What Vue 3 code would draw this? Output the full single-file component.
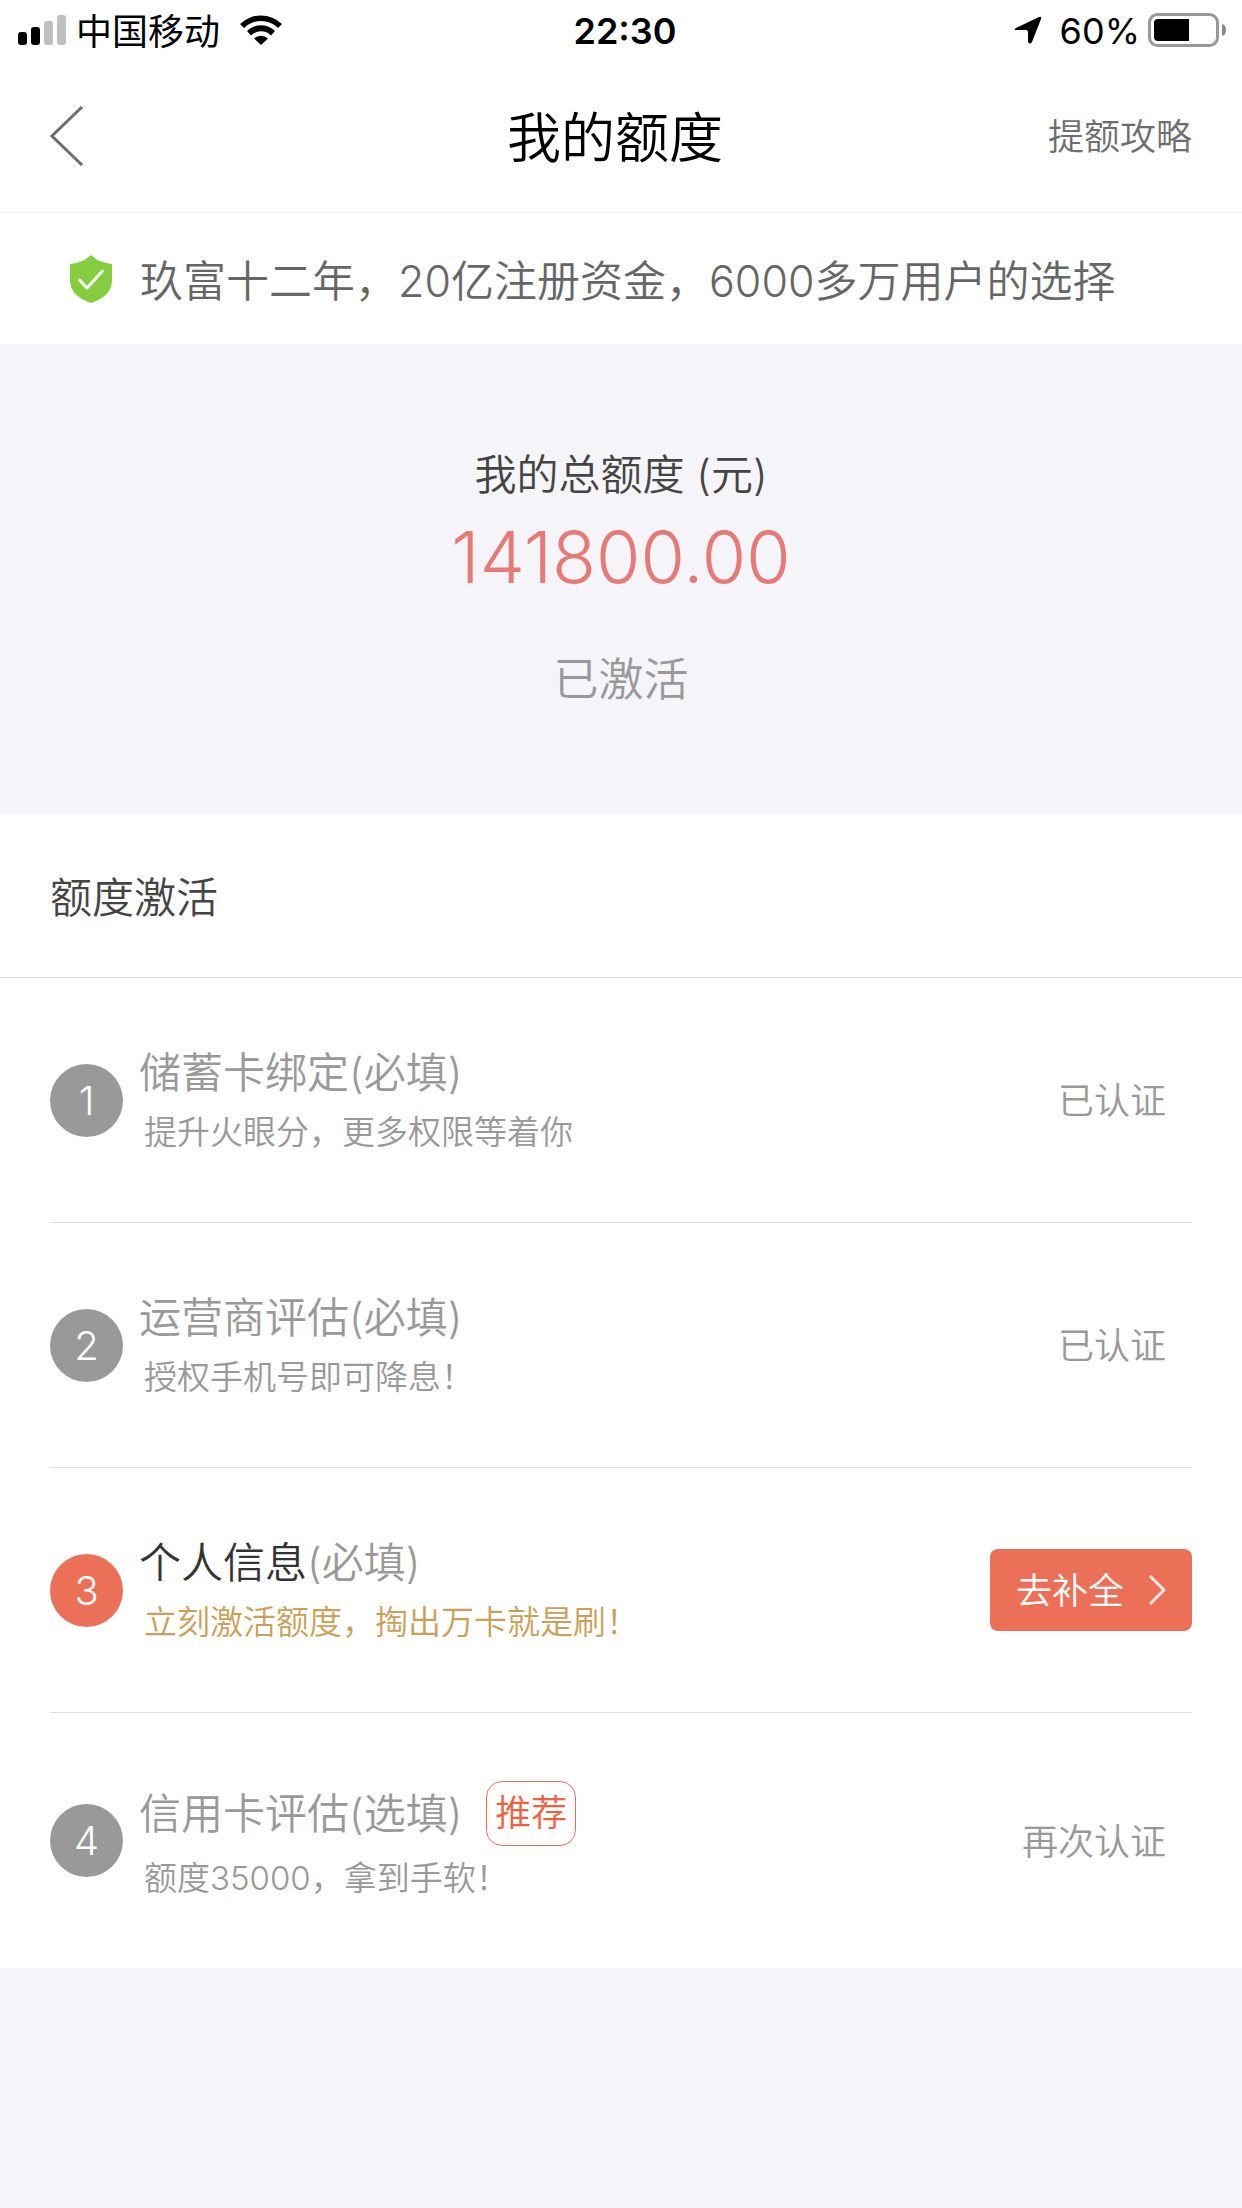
<template>
  <div class="page">
    <div class="statusBar">
      <div class="side">
        <svg class="signal" viewBox="0 0 48 30" width="48" height="30">
          <rect x="0" y="17" width="9" height="13" rx="3" />
          <rect x="13" y="12" width="9" height="18" rx="3" />
          <rect x="26" y="6" width="9" height="24" rx="3" fill="#bfbfbf" />
          <rect x="39" y="0" width="9" height="30" rx="3" fill="#bfbfbf" />
        </svg>
        <span class="carrier">中国移动</span>
        <svg class="wifi" viewBox="0 0 42 30" width="42" height="30">
          <path d="M0 9 A30 30 0 0 1 42 9 L38 13 A24 24 0 0 0 4 13 Z" />
          <path d="M7 16 A20 20 0 0 1 35 16 L31 20.500 A14 14 0 0 0 11 20.500 Z" />
          <path d="M14 23.500 A10 10 0 0 1 28 23.500 L21 30 Z" />
        </svg>
      </div>
      <span class="time">22:30</span>
      <div class="side right">
        <svg class="location" viewBox="0 0 28 28" width="28" height="28">
          <path d="M2 12 L25 1 Q28 0 27 3 L18 26 Q16 29 14 26 V16 Q14 14 12 14 H2 Q-1 14 2 12 Z" />
        </svg>
        <span class="percent">60%</span>
        <svg class="battery" viewBox="0 0 80 34" width="80" height="34">
          <rect x="1.500" y="1.500" width="68" height="31" rx="8" fill="none" stroke="#999" stroke-width="3" />
          <path d="M10 6 H41 V28 H10 Q6 28 6 24 V10 Q6 6 10 6 Z" />
          <path d="M74 11 Q78 12 78 17 Q78 22 74 23 Z" fill="#888" />
        </svg>
      </div>
    </div>

    <header class="navBar">
      <div class="navSide">
        <button class="back" type="button" aria-label="返回">
          <svg viewBox="0 0 34 60" width="34" height="60">
            <path d="M32 1 L2 30 L32 59" fill="none" stroke="#6e6e6e" stroke-width="3" />
          </svg>
        </button>
      </div>
      <h1>我的额度</h1>
      <div class="navSide right">
        <a href="#">提额攻略</a>
      </div>
    </header>

    <div class="notice">
      <svg viewBox="0 0 42 48" width="42" height="48">
        <path d="M21 0 Q29 8 42 9 V25 Q42 41 21 48 Q0 41 0 25 V9 Q13 8 21 0 Z" fill="#85cc3e" />
        <path d="M9.500 25 L17 33 L32.500 16" fill="none" stroke="#fff" stroke-width="3" stroke-linecap="round" stroke-linejoin="round" />
      </svg>
      <span>玖富十二年，20亿注册资金，6000多万用户的选择</span>
    </div>

    <section class="quota">
      <p class="label">我的总额度 (元)</p>
      <p class="amount">141800.00</p>
      <p class="state">已激活</p>
    </section>

    <section class="activate">
      <h2>额度激活</h2>
      <ul>
        <li v-for="(item, index) in stepList" :key="index" :class="{ active: item.active }">
          <span class="number">{{ index + 1 }}</span>
          <div class="info">
            <p class="name">
              <span><span class="strong">{{ item.name }}</span>({{ item.required ? '必填' : '选填' }})</span>
              <span v-if="item.tag" class="tag">{{ item.tag }}</span>
            </p>
            <p class="desc">{{ item.desc }}</p>
          </div>
          <button v-if="item.active" class="fill" type="button" @click="handleFill(index)">
            <span>{{ item.status }}</span>
            <svg viewBox="0 0 18 32" width="18" height="32">
              <path d="M2 2 L16 16 L2 30" fill="none" stroke="#fff" stroke-opacity="0.85" stroke-width="3" />
            </svg>
          </button>
          <span v-else class="status">{{ item.status }}</span>
        </li>
      </ul>
    </section>
  </div>
</template>

<script setup>
import { ref } from 'vue'

// 额度激活步骤
const stepList = ref([
  { name: '储蓄卡绑定', required: true, desc: '提升火眼分，更多权限等着你', status: '已认证' },
  { name: '运营商评估', required: true, desc: '授权手机号即可降息！', status: '已认证' },
  { name: '个人信息', required: true, desc: '立刻激活额度，掏出万卡就是刷！', status: '去补全', active: true },
  { name: '信用卡评估', required: false, desc: '额度35000，拿到手软！', status: '再次认证', tag: '推荐' },
])

// 补全信息
const handleFill = (index) => {
  stepList.value[index].active = false
  stepList.value[index].status = '已认证'
}
</script>

<style>
body {
  margin: 0;
  background-color: #f4f4f9;
}
</style>

<style scoped>
.page {
  font-family: Inter, "Noto Sans CJK SC", sans-serif;
  font-weight: 350;
  color: #999;
}

h1, h2, p, ul {
  margin: 0;
  padding: 0;
  font-weight: inherit;
}

button {
  border: none;
  padding: 0;
  background: none;
  font: inherit;
  cursor: pointer;
}

svg {
  display: block;
  flex-shrink: 0;
}

.statusBar {
  display: flex;
  align-items: center;
  height: 60px;
  padding: 0 14px 0 18px;
  background-color: #fff;
  color: #000;
  font-size: 36px;
  font-weight: 400;

  .side {
    flex: 1;
    display: flex;
    align-items: center;
  }

  .right {
    justify-content: flex-end;
  }

  .carrier {
    margin: 0 20px 0 10px;
    padding-bottom: 2px;
  }

  .time {
    padding: 2px 0 0 4px;
    font-weight: 600;
  }

  .percent {
    margin: 0 8px 0 18px;
    padding-top: 2px;
  }
}

.navBar {
  display: flex;
  align-items: center;
  height: 152px;
  padding: 0 50px;
  background-color: #fff;
  border-bottom: 1px solid #ededed;

  .navSide {
    flex: 1;
    display: flex;
  }

  .right {
    justify-content: flex-end;
  }

  h1 {
    padding: 0 12px 4px 0;
    color: #000;
    font-size: 54px;
  }

  a {
    padding-bottom: 4px;
    color: #6e6e6e;
    font-size: 36px;
    text-decoration: none;
  }
}

.notice {
  display: flex;
  align-items: center;
  gap: 28px;
  height: 131px;
  padding: 0 70px;
  background-color: #fff;
  color: #666;
  font-size: 43px;
  white-space: nowrap;

  span {
    padding-bottom: 2px;
  }
}

.quota {
  padding: 101px 0 104px;
  text-align: center;

  .label {
    color: #444;
    font-size: 42px;
    line-height: 60px;
  }

  .amount {
    color: #e57a77;
    font-size: 72px;
    font-weight: 300;
    line-height: 104px;
  }

  .state {
    padding-top: 40px;
    font-size: 45px;
    line-height: 62px;
  }
}

.activate {
  background-color: #fff;

  h2 {
    padding: 4px 50px 0;
    border-bottom: 1px solid #ddd;
    color: #444;
    font-size: 42px;
    line-height: 158px;
  }

  ul {
    padding: 0 50px;
    list-style: none;
  }

  li {
    display: flex;
    align-items: center;
    padding: 63px 0;
    border-bottom: 1px solid #ddd;

    &:last-child {
      border-bottom: none;
    }
  }
}

.number {
  width: 73px;
  height: 73px;
  border-radius: 50%;
  background-color: #999;
  color: #fff;
  font-size: 40px;
  line-height: 73px;
  text-align: center;
}

.info {
  flex: 1;
  padding-left: 16px;

  .name {
    display: flex;
    align-items: center;
    font-size: 42px;
    line-height: 64px;
  }

  .tag {
    margin: 5px 0 5px 24px;
    padding: 0 8px;
    border: 1px solid #ec7058;
    border-radius: 16px;
    color: #f0603f;
    font-size: 36px;
    line-height: 63px;
  }

  .desc {
    padding-left: 5px;
    font-size: 33px;
    line-height: 54px;
  }
}

.status {
  padding: 0 26px 4px 0;
  font-size: 36px;
}

.fill {
  display: flex;
  align-items: center;
  gap: 24px;
  height: 82px;
  padding: 0 26px;
  border-radius: 8px;
  background-color: #ec7058;
  color: #fff;
  font-size: 36px;

  span {
    padding-bottom: 4px;
  }
}

.active {
  .number {
    background-color: #ec7058;
  }

  .strong {
    color: #333;
  }

  .desc {
    color: #c9a05a;
  }
}
</style>
